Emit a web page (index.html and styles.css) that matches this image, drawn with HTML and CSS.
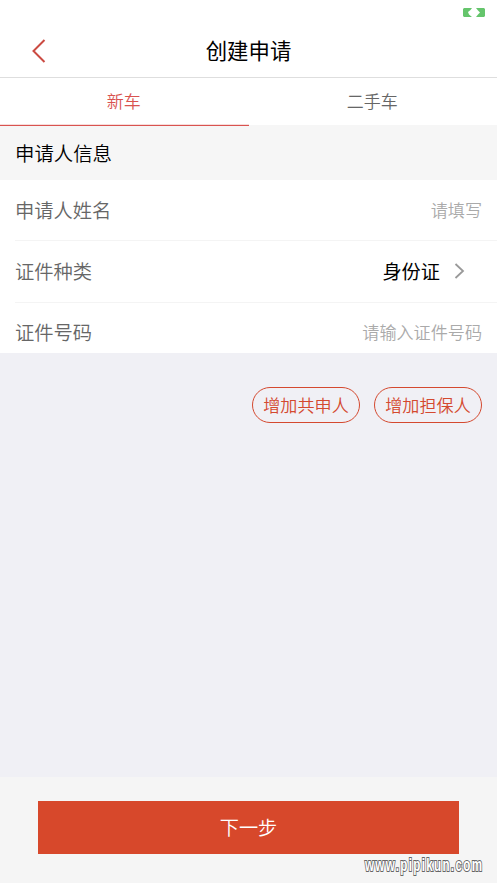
FILE: index.html
```html
<!DOCTYPE html>
<html lang="zh-CN">
<head>
<meta charset="utf-8">
<title>创建申请</title>
<link rel="stylesheet" href="styles.css">
</head>
<body>
<div class="app">
  <div class="status">
    <svg width="22" height="9" viewBox="0 0 22 9"><path fill="#65c56c" d="M1 0h8L7.500 2 5 4l1 2.500L9 9H1L0 8V1zM13 0h8l1 1v7l-1 1h-8l2-2.500L17 4.500l-2-2z"/></svg>
  </div>
  <header class="header">
    <svg class="back" width="14" height="24" viewBox="0 0 14 24"><path d="M12.500 1 1.500 12 12.500 23" fill="none" stroke="#cb4b42" stroke-width="2"/></svg>
    <h1 class="title">创建申请</h1>
  </header>
  <nav class="tabs">
    <div class="tab active">新车</div>
    <div class="tab">二手车</div>
  </nav>
  <h2 class="section">申请人信息</h2>
  <div class="form">
    <div class="row"><span class="label">申请人姓名</span><span class="hint">请填写</span></div>
    <div class="row middle"><span class="label">证件种类</span><span class="value">身份证</span>
      <svg class="chevron" width="11" height="16" viewBox="0 0 11 16"><path d="M1.500 1 9 8 1.500 15" fill="none" stroke="#999" stroke-width="1.800"/></svg>
    </div>
    <div class="row last"><span class="label">证件号码</span><span class="hint">请输入证件号码</span></div>
  </div>
  <main class="actions">
    <button class="pill">增加共申人</button>
    <button class="pill">增加担保人</button>
  </main>
  <footer class="footer">
    <button class="next">下一步</button>
    <svg class="watermark" width="126" height="29" viewBox="0 0 126 29"><text transform="translate(2 20) scale(.75 1.200)" textLength="156" lengthAdjust="spacing">www.pipikun.com</text></svg>
  </footer>
</div>
</body>
</html>
```
FILE: styles.css
```css
* { box-sizing: border-box; }
body {
  margin: 0;
  font-family: "Noto Sans CJK SC", sans-serif;
  font-weight: 350;
  color: #000;
}
.app { height: 883px; display: flex; flex-direction: column; background: #f0f0f5; overflow: hidden; }
.status { height: 25px; padding: 8px 12px 0 0; display: flex; justify-content: flex-end; background: #fff; }
.header {
  height: 53px;
  display: grid;
  grid-template-columns: 46px 1fr 46px;
  align-items: center;
  background: #fff;
  border-bottom: 1px solid #dedede;
}
.back { justify-self: end; margin-bottom: 1px; }
.title { margin: 0 0 2px; text-align: center; font-size: 21.4px; line-height: 30px; font-weight: 400; }
.tabs { height: 48px; display: flex; background: linear-gradient(#fff 47px, #f6f6f6 47px); }
.tab { flex: 1; padding-right: 1px; font-size: 17px; line-height: 45px; text-align: center; color: #666; }
.active { color: #d9534f; border-bottom: 1px solid #d9534f; box-shadow: inset 0 -1px #f7dcdb; }
.section { margin: 0; height: 54px; padding: 0 15px; background: #f6f6f6; font-size: 19.4px; line-height: 54px; font-weight: 350; }
.form { height: 173px; padding-left: 15px; background: #fff; }
.row { height: 61px; display: flex; align-items: center; padding: 0 15px 1px 0; border-bottom: 1px solid #f4f4f4; }
.middle { height: 62px; padding-bottom: 2px; }
.last { height: 50px; padding-top: 8px; border: 0; }
.label { flex: 1; font-size: 19.3px; color: #666; }
.hint { font-size: 17.1px; color: #aaa; }
.value { font-size: 19.2px; font-weight: 400; }
.chevron { margin: 0 17px 0 14px; }
.actions { flex: 1; display: flex; justify-content: flex-end; align-items: flex-start; gap: 14px; padding: 34px 15px 0; }
.pill {
  width: 108px;
  height: 36px;
  padding: 0 0 1px;
  border: 1.4px solid #d4492f;
  border-radius: 18px;
  background: transparent;
  color: #d4492f;
  font: inherit;
  font-size: 17.1px;
  line-height: 32px;
}
.footer { position: relative; height: 106px; padding: 24px 38px 0; background: #f5f5f5; }
.next { width: 100%; height: 53px; padding: 0 0 2px; border: 0; background: #d7482b; color: #fff; font: inherit; font-size: 19.2px; }
.watermark { position: absolute; left: 363px; top: 74px; }
.watermark text {
  font-family: "Liberation Sans", sans-serif;
  font-size: 15.5px;
  font-weight: 700;
  fill: #fff;
  stroke: #666;
  stroke-width: 1.8px;
  paint-order: stroke;
}
```
